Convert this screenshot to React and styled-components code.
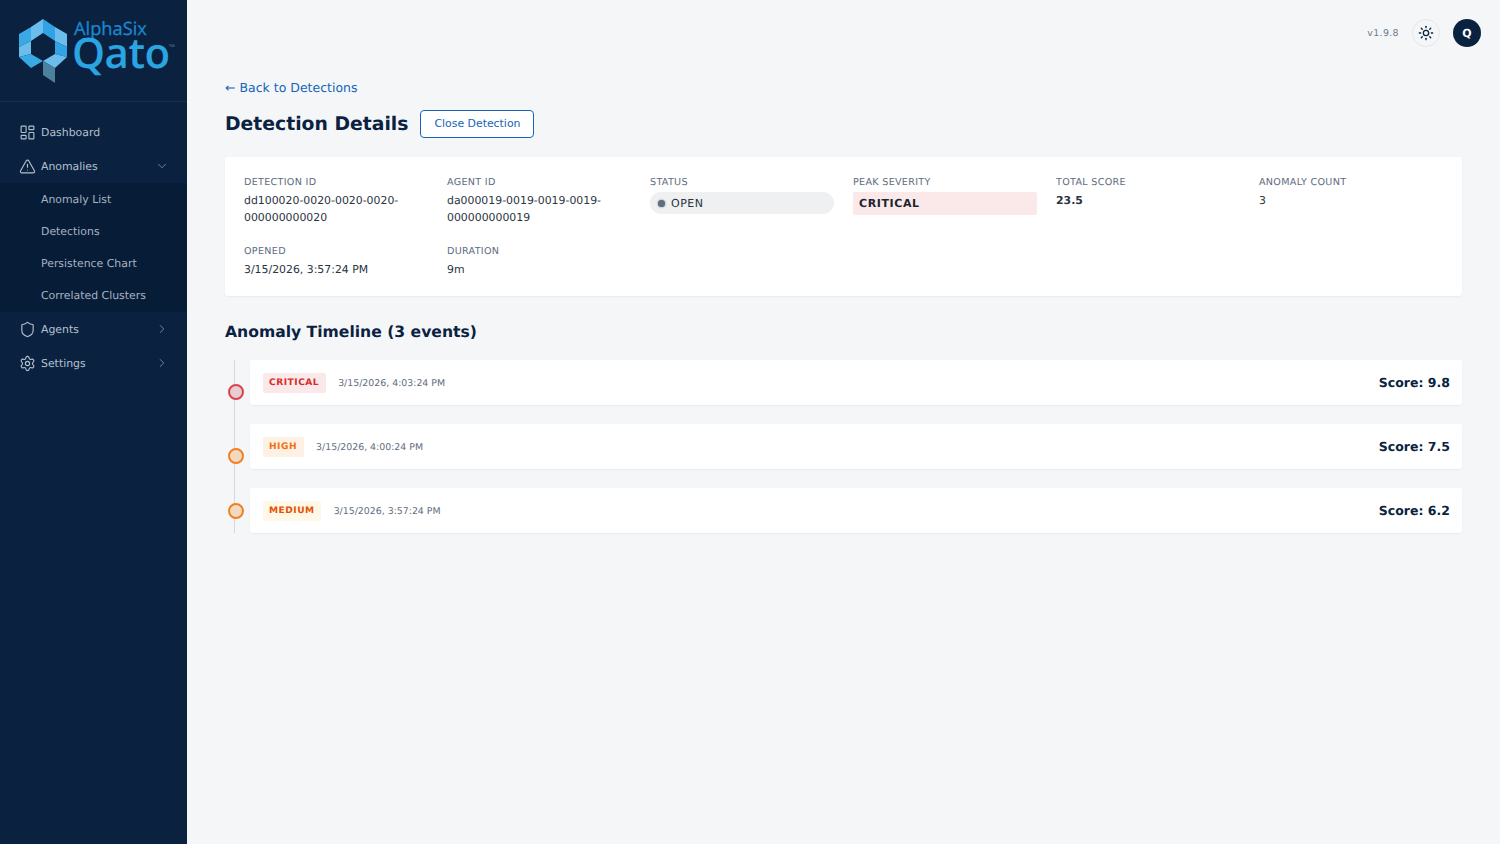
import React from "react";
import styled, { createGlobalStyle } from "styled-components";
import {
  ChevronDown,
  ChevronRight,
  LayoutDashboard,
  Settings,
  Shield,
  Sun,
  TriangleAlert,
} from "lucide-react";

const GlobalStyle = createGlobalStyle`
  html, body {
    margin: 0;
    padding: 0;
    height: 100%;
    background: #f4f6f8;
    font-family: "DejaVu Sans", sans-serif;
    text-rendering: geometricPrecision;
  }
  * { box-sizing: border-box; }
`;

const Shell = styled.div`
  display: flex;
  height: 844px;
  overflow: hidden;
`;

const Sidebar = styled.aside`
  width: 187px;
  flex-shrink: 0;
  background: #0a2240;
  display: flex;
  flex-direction: column;
`;

const Brand = styled.div`
  height: 102px;
  border-bottom: 1px solid #14304f;
  padding: 19px 0 0 18px;
  display: flex;
  gap: 5px;
`;

const Wordmark = styled.div`
  display: flex;
  flex-direction: column;
  font-family: "Open Sans", sans-serif;
  position: relative;
`;

const AlphaSix = styled.span`
  font-size: 18.3px;
  line-height: 19px;
  font-weight: 500;
  color: #1b87d0;
  margin-left: 1px;
  -webkit-text-stroke: 0.3px #1b87d0;
`;

const Qato = styled.span`
  font-size: 42px;
  line-height: 29px;
  font-weight: 600;
  color: #2ba4e2;
  margin-left: -1px;
  letter-spacing: -0.5px;
`;

const Tm = styled.span`
  position: absolute;
  top: 25px;
  right: -5px;
  font-size: 4px;
  color: #6f93b3;
`;

const Nav = styled.nav`
  padding-top: 13px;
  display: flex;
  flex-direction: column;
`;

const NavRow = styled.div`
  height: 34px;
  display: flex;
  align-items: center;
  padding: 0 18px 0 18.5px;
  gap: 5.5px;
  color: #b4c0ce;
  font-size: 10.9px;

  svg {
    flex-shrink: 0;
  }
`;

const NavLabel = styled.span`
  flex: 1;
`;

const Caret = styled.span`
  display: flex;
  color: #7f90a4;
`;

const SubNav = styled.div`
  background: #071c36;
  display: flex;
  flex-direction: column;
  height: 129px;
`;

const SubRow = styled.div`
  height: 32px;
  padding-left: 41px;
  display: flex;
  align-items: center;
  color: #a6b3c3;
  font-size: 10.9px;
`;

const Main = styled.main`
  flex: 1;
  min-width: 0;
  padding: 0 38px;
  display: flex;
  flex-direction: column;
`;

const TopBar = styled.header`
  height: 66px;
  margin-right: -19px;
  display: flex;
  align-items: center;
  justify-content: flex-end;
  gap: 13px;
`;

const Version = styled.span`
  font-size: 9.4px;
  letter-spacing: 0.4px;
  color: #6b7a8c;
`;

const ThemeButton = styled.button`
  width: 28px;
  height: 28px;
  padding: 0;
  border-radius: 50%;
  border: 1px solid #e4e7eb;
  background: #f4f6f8;
  color: #0a2240;
  display: flex;
  align-items: center;
  justify-content: center;
`;

const Avatar = styled.div`
  width: 28px;
  height: 28px;
  border-radius: 50%;
  background: #0a2240;
  color: #fff;
  font-size: 11px;
  font-weight: 700;
  display: flex;
  align-items: center;
  justify-content: center;
`;

const BackLink = styled.a`
  margin-top: 12px;
  height: 18px;
  line-height: 19px;
  font-size: 12.5px;
  color: #1565b8;
  text-decoration: none;
`;

const TitleRow = styled.div`
  margin-top: 14px;
  display: flex;
  align-items: center;
  gap: 12px;
`;

const Title = styled.h1`
  margin: 0;
  padding-top: 2px;
  font-size: 18.8px;
  line-height: 26px;
  font-weight: 700;
  color: #0a2240;
`;

const CloseButton = styled.button`
  height: 28px;
  width: 114px;
  padding: 0 0 1px;
  font-family: inherit;
  font-size: 10.9px;
  color: #1565b8;
  background: #fff;
  border: 1px solid #1565b8;
  border-radius: 4px;
`;

const InfoCard = styled.section`
  margin-top: 19px;
  height: 139px;
  background: #fff;
  border-radius: 3px;
  box-shadow: 0 1px 2px rgba(10, 34, 64, 0.05);
  padding: 19px;
  display: grid;
  grid-template-columns: repeat(6, 184px);
  grid-auto-rows: min-content;
  column-gap: 19px;
  row-gap: 16px;
`;

const Field = styled.div`
  display: flex;
  flex-direction: column;
  min-height: 53px;
`;

const FieldLabel = styled.span`
  font-size: 9.6px;
  line-height: 13px;
  letter-spacing: 0.3px;
  text-transform: uppercase;
  color: #5f6d7e;
  margin-bottom: 3px;
`;

const FieldValue = styled.span`
  font-size: 10.9px;
  line-height: 17px;
  color: #2a3340;
  font-weight: ${(p) => (p.$bold ? 700 : 400)};
  word-break: break-word;
`;

const StatusPill = styled.div`
  height: 22px;
  border-radius: 11px;
  background: #eef0f2;
  display: flex;
  align-items: center;
  gap: 6px;
  padding: 0 8px;
  font-size: 11px;
  letter-spacing: 0.5px;
  color: #2a3340;
`;

const StatusDot = styled.span`
  width: 7px;
  height: 7px;
  border-radius: 50%;
  background: #5f6d7e;
  box-shadow: 0 0 2px #5f6d7e;
`;

const SeverityBar = styled.div`
  height: 23px;
  border-radius: 2px;
  background: #fbe9e9;
  display: flex;
  align-items: center;
  padding: 0 6px;
  font-size: 11px;
  font-weight: 700;
  letter-spacing: 0.6px;
  color: #1c2430;
`;

const SectionTitle = styled.h2`
  margin: 25px 0 0;
  font-size: 15.6px;
  line-height: 22px;
  font-weight: 700;
  color: #0a2240;
`;

const Timeline = styled.div`
  position: relative;
  margin-top: 17px;
  padding-left: 25px;
  display: flex;
  flex-direction: column;
  gap: 19px;
  height: 173px;

  &::before {
    content: "";
    position: absolute;
    left: 9px;
    top: 0;
    bottom: 0;
    width: 1px;
    background: #d5dae1;
  }
`;

const EventCard = styled.div`
  position: relative;
  height: 45px;
  background: #fff;
  border-radius: 3px;
  box-shadow: 0 1px 2px rgba(10, 34, 64, 0.05);
  padding: 1px 12px 0 12.5px;
  display: flex;
  align-items: center;
  gap: 12.5px;
`;

const EventDot = styled.span`
  position: absolute;
  left: -22px;
  top: ${(p) => p.$top}px;
  width: 16px;
  height: 16px;
  border-radius: 50%;
  border: 2px solid ${(p) => p.$color};
  background: ${(p) => p.$fill};
`;

const SeverityTag = styled.span`
  height: 20px;
  padding: 0 6.5px;
  border-radius: 2px;
  display: flex;
  align-items: center;
  font-size: 9.1px;
  font-weight: 700;
  letter-spacing: 0.5px;
  background: ${(p) => p.$bg};
  color: ${(p) => p.$color};
`;

const EventTime = styled.span`
  flex: 1;
  font-size: 9.4px;
  color: #5f6d7e;
`;

const Score = styled.span`
  margin-top: -1px;
  font-size: 12.5px;
  font-weight: 700;
  color: #0a2240;
`;

const events = [
  { tag: "CRITICAL", time: "3/15/2026, 4:03:24 PM", score: "9.8", color: "#d32f2f", bg: "#fbe9e9", dot: "#d9444a", fill: "#e8ccd3", top: 24 },
  { tag: "HIGH", time: "3/15/2026, 4:00:24 PM", score: "7.5", color: "#f4700f", bg: "#fdf0e5", dot: "#f08020", fill: "#f3d9c0", top: 24 },
  { tag: "MEDIUM", time: "3/15/2026, 3:57:24 PM", score: "6.2", color: "#e65100", bg: "#fff8e9", dot: "#f08020", fill: "#f3d9c0", top: 15 },
];

function Logo() {
  return (
    <svg width="50" height="64" viewBox="18 19 50 64">
      <path d="M19 34 L31 27 L31 41 L19 47 Z" fill="#3ba8e6" />
      <path d="M31 27 L43 19 L43 33 L31 41 Z" fill="#6cbcec" />
      <path d="M43 19 L55 27 L55 41 L43 33 Z" fill="#2fa3e3" />
      <path d="M55 27 L67 34 L67 47 L55 41 Z" fill="#6cbcec" />
      <path d="M67 47 L67 57 L55 54 L55 41 Z" fill="#2fa3e3" />
      <path d="M67 57 L55 68 L43 61 L55 54 Z" fill="#6cbcec" />
      <path d="M19 47 L31 41 L31 54 L19 57 Z" fill="#6cbcec" />
      <path d="M19 57 L31 54 L43 61 L31 68 Z" fill="#3ba8e6" />
      <path d="M43 61 L55 68 L55 83 L43 75 Z" fill="#4d7f9f" />
    </svg>
  );
}

export default function App() {
  return (
    <>
      <GlobalStyle />
      <Shell>
        <Sidebar>
          <Brand>
            <Logo />
            <Wordmark>
              <AlphaSix>AlphaSix</AlphaSix>
              <Qato>Qato</Qato>
              <Tm>TM</Tm>
            </Wordmark>
          </Brand>
          <Nav>
            <NavRow>
              <LayoutDashboard size={17} strokeWidth={1.6} />
              <NavLabel>Dashboard</NavLabel>
            </NavRow>
            <NavRow>
              <TriangleAlert size={17} strokeWidth={1.6} />
              <NavLabel>Anomalies</NavLabel>
              <Caret>
                <ChevronDown size={14} strokeWidth={1.5} />
              </Caret>
            </NavRow>
            <SubNav>
              <SubRow>Anomaly List</SubRow>
              <SubRow>Detections</SubRow>
              <SubRow>Persistence Chart</SubRow>
              <SubRow>Correlated Clusters</SubRow>
            </SubNav>
            <NavRow>
              <Shield size={17} strokeWidth={1.6} />
              <NavLabel>Agents</NavLabel>
              <Caret>
                <ChevronRight size={14} strokeWidth={1.5} />
              </Caret>
            </NavRow>
            <NavRow>
              <Settings size={17} strokeWidth={1.6} />
              <NavLabel>Settings</NavLabel>
              <Caret>
                <ChevronRight size={14} strokeWidth={1.5} />
              </Caret>
            </NavRow>
          </Nav>
        </Sidebar>
        <Main>
          <TopBar>
            <Version>v1.9.8</Version>
            <ThemeButton>
              <Sun size={16} strokeWidth={2} />
            </ThemeButton>
            <Avatar>Q</Avatar>
          </TopBar>
          <BackLink href="#">← Back to Detections</BackLink>
          <TitleRow>
            <Title>Detection Details</Title>
            <CloseButton>Close Detection</CloseButton>
          </TitleRow>
          <InfoCard>
            <Field>
              <FieldLabel>Detection ID</FieldLabel>
              <FieldValue>dd100020-0020-0020-0020-000000000020</FieldValue>
            </Field>
            <Field>
              <FieldLabel>Agent ID</FieldLabel>
              <FieldValue>da000019-0019-0019-0019-000000000019</FieldValue>
            </Field>
            <Field>
              <FieldLabel>Status</FieldLabel>
              <StatusPill>
                <StatusDot />
                OPEN
              </StatusPill>
            </Field>
            <Field>
              <FieldLabel>Peak Severity</FieldLabel>
              <SeverityBar>CRITICAL</SeverityBar>
            </Field>
            <Field>
              <FieldLabel>Total Score</FieldLabel>
              <FieldValue $bold>23.5</FieldValue>
            </Field>
            <Field>
              <FieldLabel>Anomaly Count</FieldLabel>
              <FieldValue>3</FieldValue>
            </Field>
            <Field>
              <FieldLabel>Opened</FieldLabel>
              <FieldValue>3/15/2026, 3:57:24 PM</FieldValue>
            </Field>
            <Field>
              <FieldLabel>Duration</FieldLabel>
              <FieldValue>9m</FieldValue>
            </Field>
          </InfoCard>
          <SectionTitle>Anomaly Timeline (3 events)</SectionTitle>
          <Timeline>
            {events.map((e) => (
              <EventCard key={e.tag}>
                <EventDot $color={e.dot} $fill={e.fill} $top={e.top} />
                <SeverityTag $bg={e.bg} $color={e.color}>
                  {e.tag}
                </SeverityTag>
                <EventTime>{e.time}</EventTime>
                <Score>Score: {e.score}</Score>
              </EventCard>
            ))}
          </Timeline>
        </Main>
      </Shell>
    </>
  );
}
